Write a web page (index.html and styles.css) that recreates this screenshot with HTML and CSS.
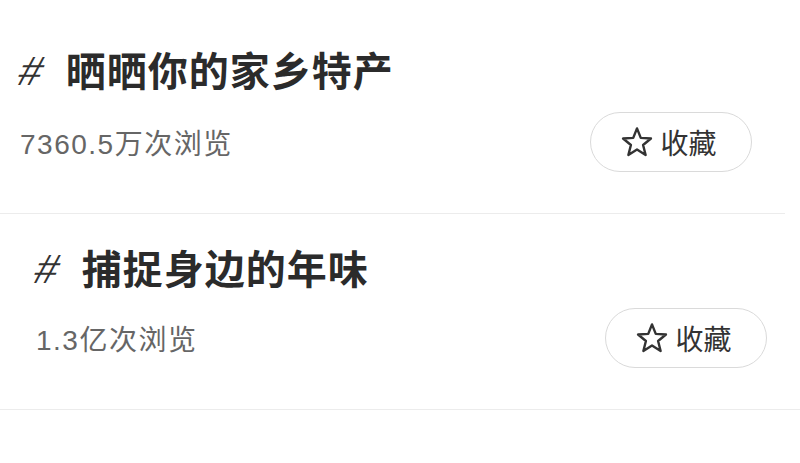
FILE: index.html
```
<!DOCTYPE html>
<html lang="zh-CN">
<head>
  <meta charset="UTF-8" />
  <title>话题</title>
  <link rel="stylesheet" href="styles.css">
</head>
<body>

  <div class="topic first">
    <div class="topic-title"><span class="hash">#</span>晒晒你的家乡特产</div>
    <div class="topic-meta">
      <span class="views">7360.5万次浏览</span>
      <button class="fav-btn">
        <svg class="star" viewBox="0 0 24 24" width="32" height="32">
          <path d="M12 1.8L14.82 8.92 22.46 9.4 16.57 14.28 18.47 21.7 12 17.6 5.53 21.7 7.43 14.28 1.54 9.4 9.18 8.92Z" fill="none" stroke="#333" stroke-width="1.8" stroke-linejoin="round"/>
        </svg>
        收藏
      </button>
    </div>
  </div>

  <div class="topic second">
    <div class="topic-title"><span class="hash">#</span>捕捉身边的年味</div>
    <div class="topic-meta">
      <span class="views">1.3亿次浏览</span>
      <button class="fav-btn">
        <svg class="star" viewBox="0 0 24 24" width="32" height="32">
          <path d="M12 1.8L14.82 8.92 22.46 9.4 16.57 14.28 18.47 21.7 12 17.6 5.53 21.7 7.43 14.28 1.54 9.4 9.18 8.92Z" fill="none" stroke="#333" stroke-width="1.8" stroke-linejoin="round"/>
        </svg>
        收藏
      </button>
    </div>
  </div>

</body>
</html>
```

FILE: styles.css
```
body {
  margin: 0;
  background: #fff;
  font-family: "Noto Sans CJK SC", "Noto Sans", sans-serif;
  color: #2b2b2b;
}

.topic {
  border-bottom: 1px solid #ececec;
}

.topic.first {
  padding: 45px 33px 41px 20px;
  margin-right: 15px;
}

.topic.second {
  padding: 29px 33px 41px 36px;
}

.topic.second .topic-meta {
  margin-top: 15px;
}

.topic-title {
  font-size: 40px;
  line-height: 48px;
  font-weight: 700;
  letter-spacing: 1px;
  white-space: nowrap;
}

.hash {
  display: inline-block;
  font-family: "Liberation Sans", sans-serif;
  font-weight: normal;
  font-size: 41px;
  color: #333;
  margin-right: 22px;
  transform: skewX(-18deg);
  vertical-align: 1px;
}

.topic-meta {
  display: flex;
  align-items: center;
  justify-content: space-between;
  margin-top: 17px;
}

.views {
  font-family: "Liberation Sans", "Noto Sans CJK SC", sans-serif;
  font-size: 28px;
  letter-spacing: 1.5px;
  color: #666;
}

.fav-btn {
  display: flex;
  align-items: center;
  justify-content: center;
  gap: 7px;
  width: 162px;
  height: 60px;
  border: 1.5px solid #dadada;
  border-radius: 30px;
  background: #fff;
  font-family: "Noto Sans CJK SC", sans-serif;
  font-size: 28px;
  color: #333;
  padding: 0 4px 0 0;
  cursor: pointer;
}

.star {
  display: block;
}
```
